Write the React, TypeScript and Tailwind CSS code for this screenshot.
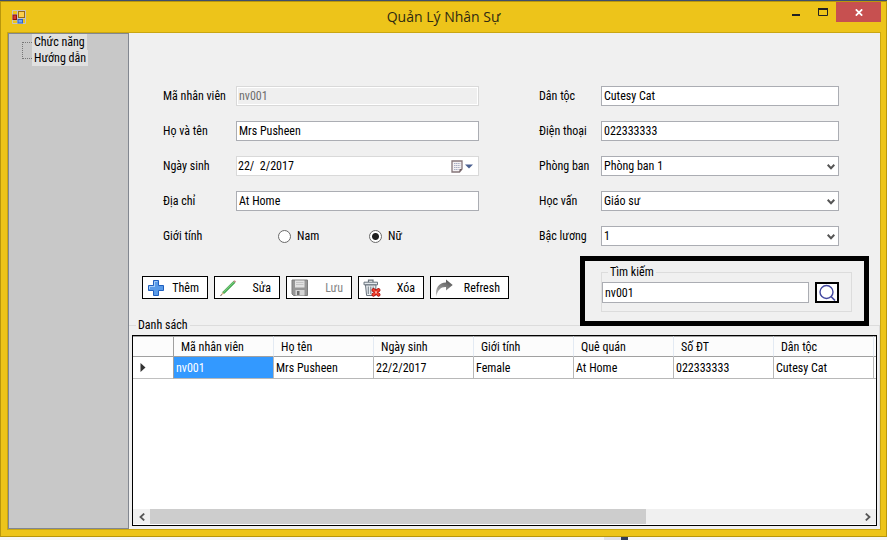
import React from "react";

const fieldBase =
  "h-5 w-full min-w-0 border border-[#abadb3] bg-white px-0.5 text-xs leading-4 text-black outline-none";

function Label({ htmlFor, children }: { htmlFor: string; children: React.ReactNode }) {
  return (
    <label htmlFor={htmlFor} className="whitespace-nowrap">
      {children}
    </label>
  );
}

function TextField({ id, value, disabled }: { id: string; value: string; disabled?: boolean }) {
  return (
    <input
      id={id}
      type="text"
      defaultValue={value}
      disabled={disabled}
      className={`${fieldBase} disabled:border-[#d9d9d9] disabled:bg-[#efefef] disabled:text-[#6d6d6d] disabled:shadow-[inset_0_0_0_1px_#ffffff]`}
    />
  );
}

function SelectField({ id, value }: { id: string; value: string }) {
  return (
    <div className="relative">
      <select id={id} defaultValue={value} className={`${fieldBase} block appearance-none`}>
        <option>{value}</option>
      </select>
      <svg viewBox="0 0 8 6" className="pointer-events-none absolute top-2 right-1 h-[6px] w-2">
        <path d="M0.7 0.8 L4 4.2 L7.3 0.8" fill="none" stroke="#555" strokeWidth="2" />
      </svg>
    </div>
  );
}

function DateField({ id, value }: { id: string; value: string }) {
  return (
    <div className="flex h-5 items-center border border-[#d9d9d9] bg-white pr-[5px]">
      <input
        id={id}
        type="text"
        defaultValue={value}
        className="min-w-0 flex-1 bg-transparent px-px text-xs leading-4 whitespace-pre outline-none"
      />
      <button type="button" aria-label="Ngày sinh" className="flex items-center gap-0.5">
        <svg viewBox="0 0 12 13" className="h-[13px] w-3">
          <path d="M1 1 H11 V9 L8.500 12 H1 Z" fill="#f4f1f3" stroke="#85767a" strokeWidth="1.300" />
          <path d="M11 9 H8.500 V12 Z" fill="#6d5f62" />
          <path
            d="M3 3.500 H9.300 M3 5.500 H9.300 M3 7.500 H9.300 M3 9.500 H7.500"
            stroke="#a9aec4"
            strokeWidth="1.200"
            strokeDasharray="1.300 0.500"
          />
        </svg>
        <svg viewBox="0 0 8 5" className="h-[5px] w-2">
          <path d="M0 0.500 H8 L4 4.500 Z" fill="#4a5f8f" />
        </svg>
      </button>
    </div>
  );
}

function Radio({ id, label, checked }: { id: string; label: string; checked?: boolean }) {
  return (
    <div className="flex w-[91px] items-center gap-1.5">
      <input
        id={id}
        type="radio"
        name="gender"
        defaultChecked={checked}
        className="h-[13px] w-[13px] appearance-none rounded-full border border-[#6a6a6a] bg-white checked:bg-[radial-gradient(circle,#1e1e1e_0_3px,#ffffff_4px)]"
      />
      <label htmlFor={id}>{label}</label>
    </div>
  );
}

function ToolButton({
  label,
  icon,
  disabled,
  width,
}: {
  label: string;
  icon: React.ReactNode;
  disabled?: boolean;
  width: string;
}) {
  return (
    <button
      type="button"
      disabled={disabled}
      className={`${width} flex h-[23px] items-center justify-between border border-black bg-white pr-2 pl-1 disabled:text-[#838383]`}
    >
      {icon}
      {label}
    </button>
  );
}

const PlusIcon = (
  <svg viewBox="0 0 18 18" className="h-[18px] w-[18px]">
    <path
      d="M6.500 1.500 H11.500 V6.500 H16.500 V11.500 H11.500 V16.500 H6.500 V11.500 H1.500 V6.500 H6.500 Z"
      fill="#5a9be8"
      stroke="#1f5fbf"
      strokeLinejoin="round"
    />
    <path d="M7.500 8 V2.500 H10.500 M2.500 10 V7.500 H7" fill="none" stroke="#a5cdf8" />
  </svg>
);

const PencilIcon = (
  <svg viewBox="0 0 18 18" className="h-[18px] w-[18px]">
    <path d="M3.500 13.300 L14.500 2.300 L16 3.700 L5 14.700 Z" fill="#4bb454" stroke="#2f8f3c" strokeWidth="0.700" />
    <path d="M4.200 13.500 L15 2.700" stroke="#a4e3a2" strokeWidth="0.700" />
    <path d="M3.500 13.300 L5 14.700 L1.500 16.700 Z" fill="#d9b586" />
    <path d="M1 17.200 L3 16 L2.200 15.200 Z" fill="#444" />
    <path d="M14.500 2.300 L15.600 1.200 L17.100 2.600 L16 3.700 Z" fill="#c98a8a" />
  </svg>
);

const SaveIcon = (
  <svg viewBox="0 0 18 18" className="h-[18px] w-[18px]">
    <path d="M1 1 H16.500 V16.500 H2.500 L1 15 Z" fill="#979797" stroke="#7d7d7d" />
    <path d="M4 1.500 H13.500 V8.500 H4 Z" fill="#e2e2e2" />
    <path d="M5 3.500 H12.500 M5 5.500 H12.500" stroke="#c4c4c4" />
    <path d="M4.500 11 H13.500 V16.500 H4.500 Z" fill="#d6d6d6" />
    <path d="M6 12 H8.500 V16 H6 Z" fill="#707070" />
  </svg>
);

const TrashIcon = (
  <svg viewBox="0 0 18 18" className="h-[18px] w-[18px]">
    <path d="M5.500 3 V1.200 H10 V3" fill="none" stroke="#68727c" strokeWidth="1.200" />
    <path d="M1 3.200 H14.500 V5.800 H1 Z" fill="#e4e9ed" stroke="#68727c" />
    <path d="M2.500 6 H13 L12.300 16.500 H3.600 Z" fill="#e9edf0" stroke="#68727c" />
    <path d="M5.300 7.500 V15 M7.800 7.500 V15 M10.200 7.500 V11" stroke="#7b858e" strokeWidth="1.100" />
    <path d="M10.500 11 L15.500 15.700 M15.500 11 L10.500 15.700" stroke="#a80f0f" strokeWidth="3.800" strokeLinecap="round" />
    <path d="M10.500 11 L15.500 15.700 M15.500 11 L10.500 15.700" stroke="#f0402c" strokeWidth="2.400" strokeLinecap="round" />
    <path d="M12 12.400 L14 14.300 M14 12.400 L12 14.300" stroke="#ffd9d2" strokeWidth="0.800" />
  </svg>
);

const RefreshIcon = (
  <svg viewBox="0 0 18 18" className="h-[18px] w-[18px]">
    <defs>
      <linearGradient id="arrowShade" x1="0" y1="1" x2="0.500" y2="0">
        <stop offset="0" stopColor="#c4c4c4" />
        <stop offset="1" stopColor="#5e5e5e" />
      </linearGradient>
    </defs>
    <path d="M1.200 17.500 C0 9 4 3.600 11 3.600 V0.500 L17.700 5.900 L11 11.500 V8 C6 7.700 2.600 11 1.200 17.500 Z" fill="url(#arrowShade)" />
  </svg>
);

const columns = ["Mã nhân viên", "Họ tên", "Ngày sinh", "Giới tính", "Quê quán", "Số ĐT", "Dân tộc"];
const record = ["nv001", "Mrs Pusheen", "22/2/2017", "Female", "At Home", "022333333", "Cutesy Cat"];

function TitleBar() {
  return (
    <header className="grid h-[31px] grid-cols-[1fr_auto_1fr] items-start">
      <svg viewBox="0 0 14 14" className="mt-2 ml-[11px] h-[14px] w-[14px]">
        <path d="M0.500 0.500 H13.500 V13.500 H0.500 Z M5.500 0.500 V13.500 M0.500 4.500 H5.500 M0.500 10 H5.500 M5.500 8.500 H13.500" fill="none" stroke="#c4c4c4" />
        <rect x="1" y="5" width="3.500" height="4.500" fill="#d63a2c" stroke="#8e120e" />
        <rect x="6.500" y="1.500" width="6" height="6" fill="#fbd04d" stroke="#9b6a11" />
        <rect x="6" y="9.500" width="4.500" height="3.500" fill="#6ea4f5" stroke="#2d62c9" />
      </svg>
      <h1 className="pt-[5px] font-['Open_Sans',sans-serif] text-sm text-[#2f2a12]">Quản Lý Nhân Sự</h1>
      <div className="flex justify-end">
        <button type="button" aria-label="Minimize" className="flex h-5 w-[27px] items-center justify-center">
          <svg viewBox="0 0 10 10" className="h-[10px] w-[10px]">
            <rect x="1" y="7" width="8" height="2" fill="#222" />
          </svg>
        </button>
        <button type="button" aria-label="Maximize" className="flex h-5 w-[27px] items-center justify-center">
          <svg viewBox="0 0 10 8" className="h-2 w-[10px]">
            <path d="M0.500 1 V7.500 H9.500 V1" fill="none" stroke="#222" />
            <rect width="10" height="2" fill="#222" />
          </svg>
        </button>
        <button type="button" aria-label="Close" className="mr-[5px] flex h-5 w-[45px] items-center justify-center bg-[#c75050]">
          <svg viewBox="0 0 8 7" className="h-[7px] w-2">
            <path d="M0.800 0.300 L7.200 6.700 M7.200 0.300 L0.800 6.700" stroke="#fff" strokeWidth="1.700" />
          </svg>
        </button>
      </div>
    </header>
  );
}

function Sidebar() {
  return (
    <nav className="flex w-[121px] shrink-0 items-start border border-[#828790] bg-[#c8c8c8] pl-[13px]">
      <div className="mt-2 h-[17px] w-[10px] border-y border-l border-dotted border-[#777]" />
      <ul className="leading-4">
        <li>
          <a href="#chuc-nang" className="inline-block bg-[#e0e0e0] px-0.5 align-top">Chức năng</a>
        </li>
        <li>
          <a href="#huong-dan" className="inline-block bg-[#e0e0e0] px-0.5 align-top">Hướng dẫn</a>
        </li>
      </ul>
    </nav>
  );
}

function EmployeeForm() {
  return (
    <form className="grid grid-cols-[73px_243fr_60px_62px_238fr] items-center gap-y-[15px] pt-[53px] pr-[41px] pl-[34px]">
      <Label htmlFor="code">Mã nhân viên</Label>
      <TextField id="code" value="nv001" disabled />
      <span />
      <Label htmlFor="ethnic">Dân tộc</Label>
      <TextField id="ethnic" value="Cutesy Cat" />

      <Label htmlFor="name">Họ và tên</Label>
      <TextField id="name" value="Mrs Pusheen" />
      <span />
      <Label htmlFor="phone">Điện thoại</Label>
      <TextField id="phone" value="022333333" />

      <Label htmlFor="birth">Ngày sinh</Label>
      <DateField id="birth" value="22/  2/2017" />
      <span />
      <Label htmlFor="dept">Phòng ban</Label>
      <SelectField id="dept" value="Phòng ban 1" />

      <Label htmlFor="address">Địa chỉ</Label>
      <TextField id="address" value="At Home" />
      <span />
      <Label htmlFor="education">Học vấn</Label>
      <SelectField id="education" value="Giáo sư" />

      <span>Giới tính</span>
      <div className="flex pl-[42px]">
        <Radio id="male" label="Nam" />
        <Radio id="female" label="Nữ" checked />
      </div>
      <span />
      <Label htmlFor="salary">Bậc lương</Label>
      <SelectField id="salary" value="1" />
    </form>
  );
}

function SearchBox() {
  return (
    <div className="w-[289px] border-[5px] border-black bg-[#f0f0f0] pt-[3px] pr-3 pb-[9px] pl-4">
      <fieldset className="border border-[#dcdcdc] pt-0.5 pb-2">
        <legend className="ml-1.5 px-0.5 leading-4">Tìm kiếm</legend>
        <div className="flex items-center gap-1.5 pr-3">
          <input
            type="text"
            aria-label="Tìm kiếm"
            defaultValue="nv001"
            className="h-[21px] w-full min-w-0 border border-[#abadb3] bg-white px-0.5 text-xs text-black outline-none"
          />
          <button
            type="button"
            aria-label="Tìm"
            className="flex h-[21px] w-6 shrink-0 items-center justify-center border-2 border-black bg-white"
          >
            <svg viewBox="0 0 18 17" className="h-[17px] w-[18px]">
              <circle cx="8.500" cy="8" r="6.500" fill="none" stroke="#4348a0" strokeWidth="1.400" />
              <path d="M13 12.500 L17 16.500" stroke="#4348a0" strokeWidth="1.600" />
            </svg>
          </button>
        </div>
      </fieldset>
    </div>
  );
}

function ScrollBar() {
  return (
    <div className="mb-px flex h-[15px] items-center bg-[#f0f0f0]">
      <button type="button" aria-label="Cuộn trái" className="flex w-[17px] justify-center">
        <svg viewBox="0 0 6 8" className="h-2 w-[6px]">
          <path d="M5.200 0.600 L1.500 4 L5.200 7.400" fill="none" stroke="#555" strokeWidth="1.800" />
        </svg>
      </button>
      <div className="flex flex-1 self-stretch">
        <div className="w-[70%] bg-[#cdcdcd]" />
      </div>
      <button type="button" aria-label="Cuộn phải" className="flex w-[17px] justify-center">
        <svg viewBox="0 0 6 8" className="h-2 w-[6px]">
          <path d="M0.800 0.600 L4.500 4 L0.800 7.400" fill="none" stroke="#555" strokeWidth="1.800" />
        </svg>
      </button>
    </div>
  );
}

function EmployeeList() {
  return (
    <fieldset className="mb-[3px] flex min-w-0 flex-1 flex-col border-t border-r border-[#dcdcdc] pr-0.5 pl-[3px]">
      <legend className="ml-1 px-0.5 leading-4">Danh sách</legend>
      <div className="mt-0.5 flex flex-1 flex-col overflow-hidden border border-black bg-white">
        <div className="flex-1 overflow-hidden">
          <table className="w-[841px] table-fixed border-separate border-spacing-0 text-left">
            <thead>
              <tr className="h-[21px] bg-[#fcfcfc]">
                <th aria-label="Hàng" className="w-[41px] border-t border-r border-b border-[#a0a0a0]" />
                {columns.map((c) => (
                  <th key={c} className="w-[100px] border-t border-r border-b border-t-[#a0a0a0] border-r-[#e3eaf3] border-b-[#a0a0a0] p-0 pl-[7px] font-normal leading-4">
                    {c}
                  </th>
                ))}
                <th aria-label="Khác" className="border-t border-b border-[#a0a0a0]" />
              </tr>
            </thead>
            <tbody>
              <tr className="h-[22px]">
                <th aria-label="Hàng hiện tại" className="border-r border-b border-r-[#a0a0a0] border-b-[#c0c0c0] p-0 pl-[7px]">
                  <svg viewBox="0 0 6 9" className="h-[9px] w-[6px]">
                    <path d="M0.500 0 L5.500 4.500 L0.500 9 Z" fill="#333" />
                  </svg>
                </th>
                {record.map((v, i) => (
                  <td
                    key={v}
                    className={`border-r border-b border-[#b8b8b8] p-0 pl-0.5 leading-4 ${i === 0 ? "bg-[#3399ff] text-white" : ""}`}
                  >
                    {v}
                  </td>
                ))}
                <td className="border-b border-[#b8b8b8]" />
              </tr>
            </tbody>
          </table>
        </div>
        <ScrollBar />
      </div>
    </fieldset>
  );
}

export default function App() {
  return (
    <div className="flex min-h-screen flex-col bg-[#f7f7f7] font-['Roboto_Condensed',Roboto,sans-serif] text-xs leading-4 text-black">
      <div className="flex flex-1 flex-col border-t border-[#3d4f6e]">
        <div className="flex flex-1 flex-col border border-[#b8960c] bg-[#edc41a]">
          <TitleBar />
          <div className="mr-1.5 mb-[7px] ml-[7px] flex flex-1 bg-[#f0f0f0] outline outline-[#c9a612]">
            <Sidebar />
            <main className="flex min-w-0 flex-1 flex-col">
              <EmployeeForm />
              <div className="relative z-10 mt-2.5 -mb-[9px] flex items-start justify-between pr-[11px] pl-[13px]">
                <div className="flex gap-1.5 pt-5">
                  <ToolButton label="Thêm" icon={PlusIcon} width="w-[66px]" />
                  <ToolButton label="Sửa" icon={PencilIcon} width="w-[66px]" />
                  <ToolButton label="Lưu" icon={SaveIcon} disabled width="w-[66px]" />
                  <ToolButton label="Xóa" icon={TrashIcon} width="w-[66px]" />
                  <ToolButton label="Refresh" icon={RefreshIcon} width="w-[79px]" />
                </div>
                <SearchBox />
              </div>
              <EmployeeList />
            </main>
          </div>
        </div>
      </div>
      <div className="flex h-[3px] justify-end pr-[259px]">
        <div className="w-[17px] bg-[#e2e2e8]" />
        <div className="w-[7px] bg-[#2f3b59]" />
      </div>
    </div>
  );
}
